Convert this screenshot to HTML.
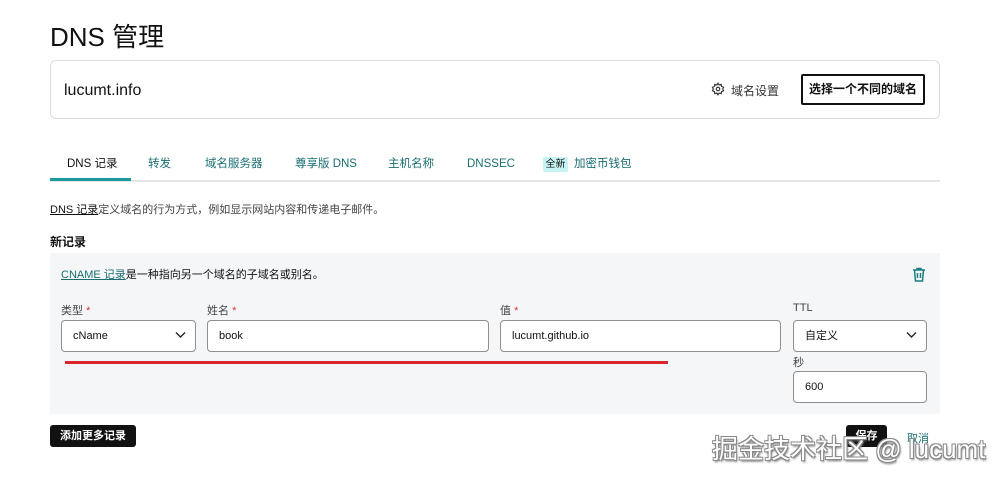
<!DOCTYPE html>
<html><head><meta charset="utf-8"><style>
*{box-sizing:border-box;margin:0;padding:0}
body{width:1000px;height:479px;background:#fff;font-family:"Liberation Sans","Noto Sans CJK SC",sans-serif;color:#111;position:relative;overflow:hidden}
.a{position:absolute;white-space:nowrap}
.inp{position:absolute;height:32px;border:1px solid #8f8f8f;border-radius:4px;background:#fff;font-size:11px;padding-left:11px;line-height:30px}
.chev{position:absolute;right:9px;top:10px}
.lab{font-size:11px;color:#444}
.star{color:#d33}
.tab{position:absolute;top:156px;font-size:11.5px;line-height:16px;height:16px;color:#1a6e73}
</style></head><body>
<div class="a" style="left:50px;top:17px;font-size:26px;">DNS 管理</div>
<div class="a" style="left:50px;top:60px;width:890px;height:59px;border:1px solid #ddd;border-radius:6px"></div>
<div class="a" style="left:64px;top:82px;font-size:16px">lucumt.info</div>
<svg class="a" style="left:711px;top:82px" width="14" height="14" viewBox="0 0 24 24" fill="none" stroke="#333" stroke-width="2"><circle cx="12" cy="12" r="3"/><path d="M12 2l2 3 3.5-1 .5 3.5 3.5 1.5-1.5 3 1.5 3-3.5 1.5-.5 3.5-3.5-1-2 3-2-3-3.5 1-.5-3.5L2.5 15 4 12 2.5 9 6 7.5 6.5 4 10 5z"/></svg>
<div class="a" style="left:731px;top:82px;font-size:12px;color:#333">域名设置</div>
<div class="a" style="left:801px;top:74px;width:124px;height:31px;border:2px solid #111;border-radius:2px;font-size:12px;text-align:center;line-height:27px;font-weight:bold">选择一个不同的域名</div>
<div class="tab" style="left:67px;color:#111">DNS 记录</div>
<div class="tab" style="left:148px">转发</div>
<div class="tab" style="left:205px">域名服务器</div>
<div class="tab" style="left:295px">尊享版 DNS</div>
<div class="tab" style="left:388px">主机名称</div>
<div class="tab" style="left:467px">DNSSEC</div>
<div class="a" style="left:543px;top:157px;width:25px;height:15px;background:#c6f3f3;border-radius:2px;font-size:10px;text-align:center;line-height:15px;color:#111">全新</div>
<div class="tab" style="left:574px">加密币钱包</div>
<div class="a" style="left:50px;top:180px;width:890px;height:2px;background:#e6e6e6"></div>
<div class="a" style="left:50px;top:178px;width:81px;height:3px;background:#1a9a9e"></div>
<div class="a" style="left:50px;top:201px;font-size:11px;color:#444"><span style="text-decoration:underline;color:#111">DNS 记录</span>定义域名的行为方式，例如显示网站内容和传递电子邮件。</div>
<div class="a" style="left:50px;top:233px;font-size:12px;font-weight:bold">新记录</div>
<div class="a" style="left:50px;top:253px;width:890px;height:161px;background:#f5f6f8"></div>
<div class="a" style="left:61px;top:266px;font-size:11px;color:#111"><span style="text-decoration:underline;color:#1a6e73">CNAME 记录</span>是一种指向另一个域名的子域名或别名。</div>
<svg class="a" style="left:912px;top:267px" width="14" height="15" viewBox="0 0 14 15" fill="none" stroke="#1a7f84" stroke-width="1.5"><path d="M1 3h12M5 3V1.5h4V3M2.5 3l1 11h7l1-11M5.5 6v5M8.5 6v5"/></svg>
<div class="a lab" style="left:61px;top:302px">类型 <span class="star">*</span></div>
<div class="a lab" style="left:207px;top:302px">姓名 <span class="star">*</span></div>
<div class="a lab" style="left:500px;top:302px">值 <span class="star">*</span></div>
<div class="a lab" style="left:793px;top:302px">TTL</div>
<div class="inp" style="left:61px;top:320px;width:135px">cName<svg class="chev" width="11" height="8" viewBox="0 0 11 8"><path d="M1 1.5l4.5 4.5 4.5-4.5" fill="none" stroke="#222" stroke-width="1.4"/></svg></div>
<div class="inp" style="left:207px;top:320px;width:282px">book</div>
<div class="inp" style="left:500px;top:320px;width:281px">lucumt.github.io</div>
<div class="inp" style="left:793px;top:320px;width:134px">自定义<svg class="chev" width="11" height="8" viewBox="0 0 11 8"><path d="M1 1.5l4.5 4.5 4.5-4.5" fill="none" stroke="#222" stroke-width="1.4"/></svg></div>
<div class="a" style="left:65px;top:361px;width:603px;height:3px;background:#d9262e"></div>
<div class="a lab" style="left:793px;top:354px">秒</div>
<div class="inp" style="left:793px;top:371px;width:134px">600</div>
<div class="a" style="left:50px;top:425px;width:86px;height:22px;background:#111;border-radius:3px;color:#fff;font-size:11px;font-weight:bold;text-align:center;line-height:22px">添加更多记录</div>
<div class="a" style="left:846px;top:425px;width:41px;height:22px;background:#111;border-radius:3px;color:#fff;font-size:11px;font-weight:bold;text-align:center;line-height:22px">保存</div>
<div class="a" style="left:907px;top:430px;font-size:11px;color:#1a6e73">取消</div>
<div class="a" style="left:712px;top:429px;font-size:26px;color:#fff;text-shadow:-1px -1px 0 #888,1px -1px 0 #888,-1px 1px 0 #888,1px 1px 0 #888,1px 2px 2px #666">掘金技术社区 @ lucumt</div>
</body></html>
